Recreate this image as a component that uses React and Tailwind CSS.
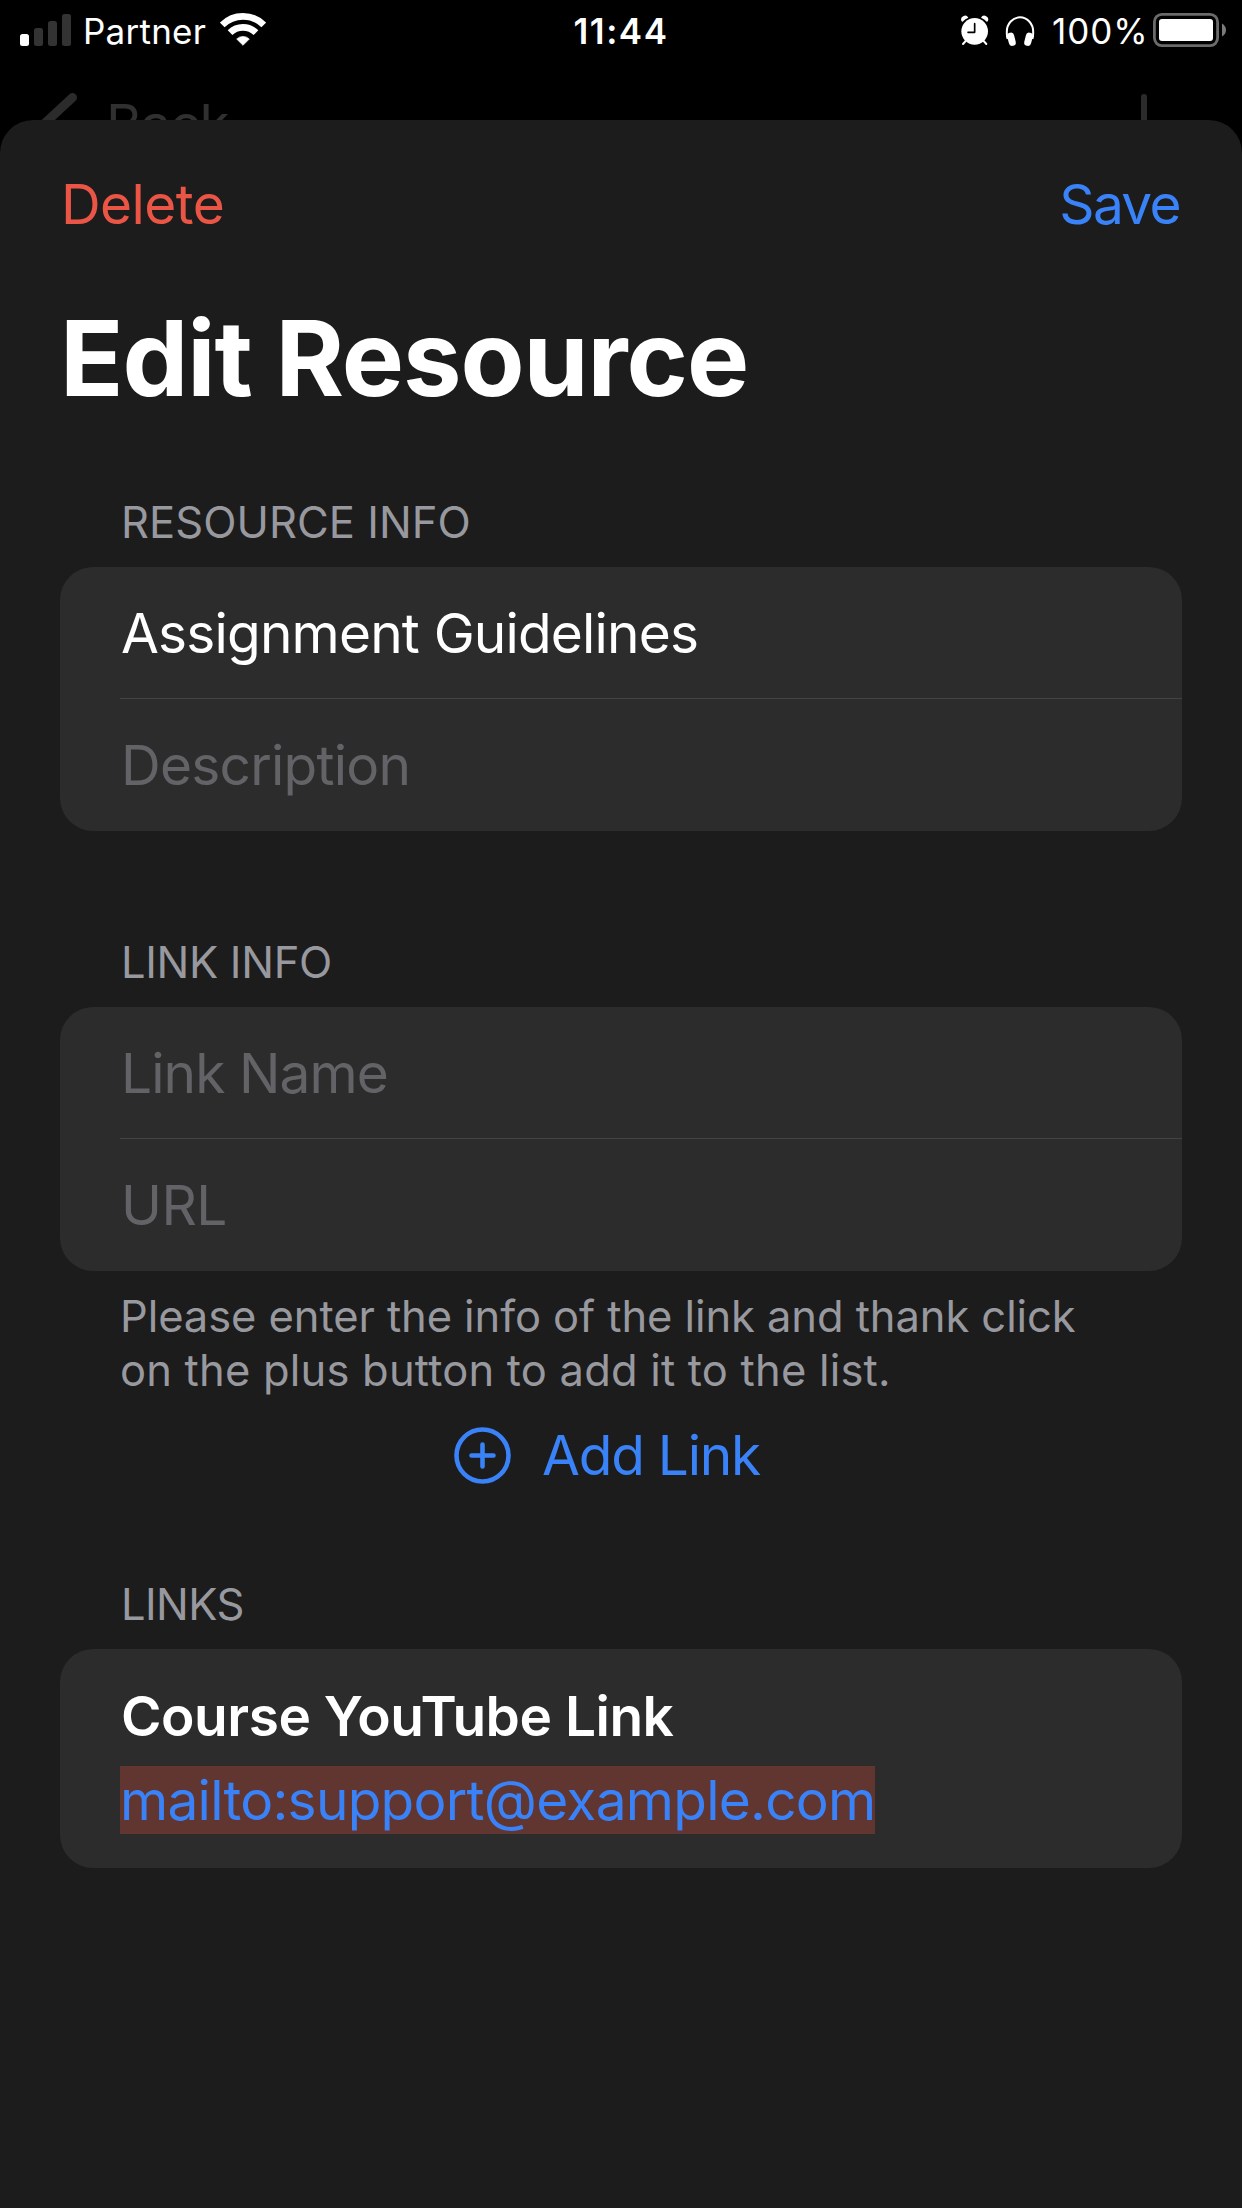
import React from "react";

function SignalIcon() {
  return (
    <svg width="51" height="32" viewBox="0 0 51 32" className="mt-[14px] shrink-0">
      <rect x="0" y="20" width="9" height="12" rx="2.5" fill="#fff" />
      <rect x="14" y="14" width="9" height="18" rx="2.5" fill="#333" />
      <rect x="28" y="7" width="9" height="25" rx="2.5" fill="#333" />
      <rect x="42" y="0" width="9" height="32" rx="2.5" fill="#333" />
    </svg>
  );
}

function WifiIcon() {
  return (
    <svg width="46" height="34" viewBox="30 22 138 102" className="mt-[12px] shrink-0">
      <path d="M36.8 60.8A88 88 0 0 1 161.2 60.8" fill="none" stroke="#fff" strokeWidth="20" />
      <path d="M60.1 84.1A55 55 0 0 1 137.9 84.1" fill="none" stroke="#fff" strokeWidth="20" />
      <path d="M99 122L80 103A27 27 0 0 1 118 103Z" fill="#fff" stroke="#fff" strokeWidth="2" strokeLinejoin="round" />
    </svg>
  );
}

function AlarmIcon() {
  return (
    <svg width="30" height="32" viewBox="29 30 90 96" className="mt-[15px] shrink-0">
      <path d="M34 49a11 11 0 0 1 20-11q-11 4-17 12q-2 1-3-1Z" fill="#fff" />
      <path d="M112 49a11 11 0 0 0-20-11q11 4 17 12q2 1 3-1Z" fill="#fff" />
      <path d="M46 108L38 117M100 108L108 117" stroke="#fff" strokeWidth="6" strokeLinecap="round" />
      <circle cx="73" cy="79" r="40" fill="#fff" />
      <path d="M73 56V82H53" fill="none" stroke="#000" strokeWidth="5" strokeLinecap="round" strokeLinejoin="round" />
    </svg>
  );
}

function HeadphonesIcon() {
  return (
    <svg width="30" height="32" viewBox="165 30 90 96" className="mt-[15px] shrink-0">
      <path d="M173 102Q170 94 170.500 80A39.500 43 0 0 1 249.500 80Q250 94 247 102" fill="none" stroke="#fff" strokeWidth="6" />
      <rect x="174" y="83" width="21" height="40" rx="10" fill="#fff" transform="rotate(-14 184 103)" />
      <rect x="225" y="83" width="21" height="40" rx="10" fill="#fff" transform="rotate(14 236 103)" />
    </svg>
  );
}

function BatteryIcon() {
  return (
    <svg width="74" height="34" viewBox="0 0 74 34" className="mt-[13px] shrink-0">
      <rect x="1.4" y="1.400" width="63.200" height="31.200" rx="7.500" fill="none" stroke="#6b6b6b" strokeWidth="2.800" />
      <rect x="6" y="6" width="54" height="22" rx="3" fill="#fff" />
      <path d="M69 10.500Q73 13 73 17T69 23.500Z" fill="#7a7a7a" />
    </svg>
  );
}

function StatusBar() {
  return (
    <div className="grid h-[62px] grid-cols-[1fr_auto_1fr] text-[35px] leading-[62px] text-white">
      <div className="flex items-start pl-5">
        <SignalIcon />
        <span className="ml-[12px] w-[123px] tracking-[0.24px]">Partner</span>
        <div className="ml-[14px]"><WifiIcon /></div>
      </div>
      <span className="font-semibold tracking-[1.56px]">11:44</span>
      <div className="flex items-start justify-end pr-[15px]">
        <AlarmIcon />
        <div className="ml-[15px]"><HeadphonesIcon /></div>
        <span className="ml-[17px] w-[96px] tracking-[0.97px]">100%</span>
        <div className="ml-[5px]"><BatteryIcon /></div>
      </div>
    </div>
  );
}

function DimmedNavBar() {
  return (
    <div className="flex h-[58px] items-start justify-between overflow-hidden pr-[95px] pl-[38px]">
      <div className="flex items-start">
        <svg width="40" height="60" viewBox="0 0 40 60" className="mt-[29px] shrink-0">
          <path d="M34.500 6.500L6 33L34.500 59" fill="none" stroke="#2b2b2b" strokeWidth="9" strokeLinecap="round" strokeLinejoin="round" />
        </svg>
        <span className="mt-[34px] ml-[28px] text-[55px] leading-[56px] tracking-[-1.6px] text-[#303030]">Back</span>
      </div>
      <div className="mt-[32px] h-[60px] w-[6px] rounded-full bg-[#2b2b2b]" />
    </div>
  );
}

function SectionLabel({ className, children }) {
  return <h2 className={"ml-[121px] text-[43.5px] leading-[54px] text-[#98989f] " + className}>{children}</h2>;
}

function Card({ className = "", children }) {
  return <div className={"mx-[60px] mt-[18px] overflow-hidden rounded-[33px] bg-[#2c2c2c] pl-[60px] " + className}>{children}</div>;
}

function Row({ className, divided, children }) {
  return (
    <div className={"h-[132px] pt-[38px] pl-px text-[55px] leading-[56px] " + (divided ? "border-b border-[#434344] " : "") + className}>
      {children}
    </div>
  );
}

export default function App() {
  return (
    <div className="h-[2208px] w-[1242px] overflow-hidden bg-black font-['Inter',sans-serif]">
      <StatusBar />
      <DimmedNavBar />
      <main className="h-[2088px] rounded-t-[33px] bg-[#1c1c1c] pt-[56px]">
        <div className="flex justify-between pr-[62px] pl-[61px] text-[55px] leading-[56px]">
          <button className="tracking-[-0.58px] text-[#eb5545]">Delete</button>
          <button className="tracking-[-1.63px] text-[#3a82f7]">Save</button>
        </div>
        <h1 className="mt-[66px] ml-[60px] text-[104.5px] leading-[120px] font-bold tracking-[-1.04px] text-white">Edit Resource</h1>

        <SectionLabel className="mt-[77px] tracking-[0.04px]">RESOURCE INFO</SectionLabel>
        <Card>
          <Row divided className="tracking-[-0.83px] text-white">Assignment Guidelines</Row>
          <Row className="tracking-[-0.75px] text-[#636367]">Description</Row>
        </Card>

        <SectionLabel className="mt-[104px] tracking-[-0.33px]">LINK INFO</SectionLabel>
        <Card>
          <Row divided className="tracking-[-0.92px] text-[#636367]">Link Name</Row>
          <Row className="tracking-[-0.51px] text-[#636367]">URL</Row>
        </Card>
        <p className="mt-[18px] ml-[120px] text-[43.5px] leading-[54px] whitespace-nowrap text-[#98989f]">
          <span className="block tracking-[-0.08px]">Please enter the info of the link and thank click</span>
          <span className="block tracking-[0.2px]">on the plus button to add it to the list.</span>
        </p>
        <button className="mt-[30px] flex w-full items-start justify-center pr-[28px] text-[55px] leading-[56px] tracking-[-1.24px] text-[#3a82f7]">
          <svg width="57" height="57" viewBox="0 0 57 57" className="-mb-px shrink-0" fill="none" stroke="#3a82f7">
            <circle cx="28.500" cy="28.500" r="26" strokeWidth="4.600" />
            <path d="M28.500 17.500V39.500M17.500 28.500H39.500" strokeWidth="4.600" strokeLinecap="round" />
          </svg>
          <span className="ml-[31px]">Add Link</span>
        </button>

        <SectionLabel className="mt-[94px] tracking-[-0.61px]">LINKS</SectionLabel>
        <Card className="h-[219px] pt-[39px] text-[55px]">
          <div className="pl-px leading-[56px] font-semibold tracking-[-0.47px] text-white">Course YouTube Link</div>
          <div className="mt-[22px] h-[68px] w-[755px] bg-[#613530] leading-[68px] tracking-[-0.74px] text-[#3a82f7]">mailto:support@example.com</div>
        </Card>
      </main>
    </div>
  );
}
